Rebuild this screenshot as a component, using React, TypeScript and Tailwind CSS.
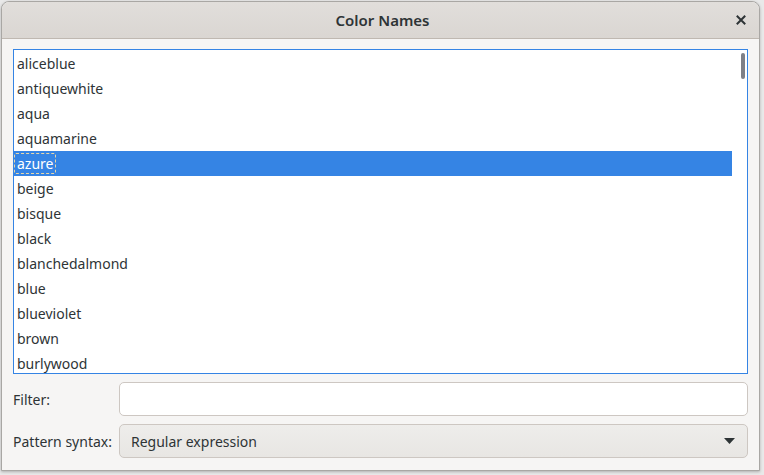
const colors = [
  "aliceblue",
  "antiquewhite",
  "aqua",
  "aquamarine",
  "azure",
  "beige",
  "bisque",
  "black",
  "blanchedalmond",
  "blue",
  "blueviolet",
  "brown",
  "burlywood",
];

export default function App() {
  const selected = "azure";

  return (
    <div className="w-[764px] h-[475px] bg-[#e9e9e9] pl-[1px] pt-[1px] font-['Noto_Sans',sans-serif] text-[#2e3436]">
      <div className="w-[759px] h-[470px] border border-[#a9a7a4] rounded-t-[8px] bg-[#f6f5f4] flex flex-col overflow-hidden shadow-[0_1px_3px_rgba(0,0,0,0.25)]">
        {/* Title bar */}
        <div className="h-[37px] shrink-0 flex items-center relative bg-gradient-to-b from-[#e1dedb] to-[#dad6d2] border-b border-[#bfb8b1] rounded-t-[7px]">
          <div className="flex-1 text-center text-[15px] font-semibold pl-[4px]">Color Names</div>
          <button className="absolute right-[10px] top-[10px] w-[16px] h-[16px] flex items-center justify-center">
            <svg width="10" height="10" viewBox="0 0 10 10">
              <path d="M1.5 1.5 L8.5 8.5 M8.5 1.5 L1.5 8.5" stroke="#2e3436" strokeWidth="2" strokeLinecap="square" />
            </svg>
          </button>
        </div>

        {/* Content */}
        <div className="flex-1 flex flex-col px-[11px] pt-[10px] pb-[12px] gap-[8px]">
          {/* List */}
          <div className="h-[325px] shrink-0 border border-[#3584e4] bg-white relative overflow-hidden pt-[1px]">
            <div className="mr-[15px]">
              {colors.map((c) => (
                <div
                  key={c}
                  className={
                    c === selected
                      ? "h-[25px] flex items-center pl-[0px] bg-[#3584e4] text-white text-[14px]"
                      : "h-[25px] flex items-center pl-[3px] text-[14px]"
                  }
                >
                  {c === selected ? (
                    <span className="border border-dashed border-[#e8d7a8] px-[2px] leading-[19px] rounded-[2px]">{c}</span>
                  ) : (
                    c
                  )}
                </div>
              ))}
            </div>
            <div className="absolute right-[2px] top-[3px] w-[4px] h-[26px] rounded-full bg-[#7e8087]" />
          </div>

          {/* Filter */}
          <div className="flex items-center h-[34px]">
            <div className="w-[106px] text-[14px]">Filter:</div>
            <div className="flex-1 h-full bg-white border border-[#cdc7c2] rounded-[5px]" />
          </div>

          {/* Pattern syntax */}
          <div className="flex items-center h-[34px]">
            <div className="w-[106px] text-[14px]">Pattern syntax:</div>
            <div className="flex-1 h-full flex items-center justify-between border border-[#cdc7c2] rounded-[5px] bg-gradient-to-b from-[#eeedeb] to-[#e8e6e3] pl-[11px] pr-[12px] text-[14px]">
              <span>Regular expression</span>
              <svg width="11" height="6" viewBox="0 0 11 6">
                <path d="M0 0 H11 L5.5 6 Z" fill="#2e3436" />
              </svg>
            </div>
          </div>
        </div>
      </div>
    </div>
  );
}
